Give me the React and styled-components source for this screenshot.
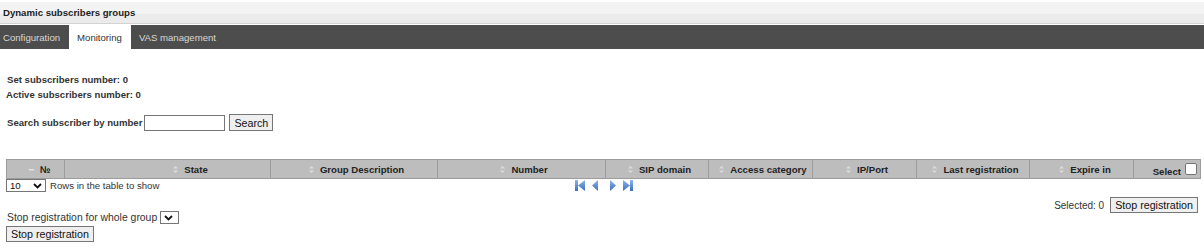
import React from 'react';
import styled, { createGlobalStyle } from 'styled-components';

const GlobalStyle = createGlobalStyle`
  body {
    margin: 0;
    background: #fff;
    font-family: "Liberation Sans", Arial, sans-serif;
    font-size: 9.6px;
    color: #333;
  }
`;

const Page = styled.div`
  width: 1204px;
  padding-top: 2px;
`;

const TitleBar = styled.div`
  height: 21px;
  padding-left: 3px;
  display: flex;
  align-items: center;
  background: linear-gradient(#f3f3f3 0, #f3f3f3 55%, #ebebeb 55%, #ebebeb 100%);
  border-bottom: 1px solid #d2d2d2;
  font-weight: bold;
  color: #222;
  margin-bottom: 1px;
`;

const TabBar = styled.div`
  display: flex;
  height: 24px;
  background: #4d4d4d;
`;

const Tab = styled.div`
  display: flex;
  align-items: center;
  padding: 0 9px 0 8px;
  color: ${(p) => (p.$active ? '#333' : '#d8d8d8')};
  background: ${(p) => (p.$active ? '#fff' : 'transparent')};
  &:first-child {
    padding-left: 3px;
  }
`;

const Content = styled.div`
  padding: 23px 6px 0 6px;
`;

const Stat = styled.div`
  font-weight: bold;
  line-height: 15px;
  padding-left: ${(p) => p.$indent || 0}px;
`;

const SearchRow = styled.div`
  display: flex;
  align-items: center;
  margin-top: 12px;
  padding-left: 1px;
  font-weight: bold;
  gap: 2px;
`;

const TextInput = styled.input`
  box-sizing: border-box;
  width: 81px;
  height: 16px;
  border: 1px solid #767676;
  padding: 1px;
  margin: 0;
`;

const Button = styled.button`
  box-sizing: border-box;
  font-family: "Liberation Sans", Arial, sans-serif;
  font-size: 10.7px;
  color: #111;
  background: #efefef;
  border: 1px solid #767676;
  padding: 0 4px;
  height: ${(p) => p.$h || 16}px;
  line-height: 12px;
  margin: ${(p) => (p.$gap ? '0 0 0 2px' : '0')};
`;

const Table = styled.table`
  width: 1194px;
  margin-top: 28px;
  border-collapse: collapse;
  table-layout: fixed;
`;

const Th = styled.th`
  box-sizing: border-box;
  background: #bdbdbd;
  border: 1px solid #9c9c9c;
  height: 19px;
  padding: 0 3px 0 ${(p) => p.$pl || 7}px;
  font-size: 9.6px;
  color: #222;
  text-align: ${(p) => p.$align || 'center'};
  vertical-align: middle;
  white-space: nowrap;
  overflow: hidden;
`;

const SortIcon = styled.svg`
  width: 7px;
  height: 9px;
  margin-right: 5px;
  vertical-align: -1px;
`;

const SelectBox = styled.span`
  display: inline-block;
  box-sizing: border-box;
  width: 12px;
  height: 12px;
  margin: 0 0 0 4px;
  border: 1px solid #767676;
  border-radius: 2px;
  background: #fff;
  vertical-align: middle;
`;

const SelectLabel = styled.span`
  display: inline-block;
  vertical-align: middle;
  padding-top: 4px;
`;

const Footer = styled.div`
  display: grid;
  grid-template-columns: 1fr auto 1fr;
  align-items: start;
`;

const RowsControl = styled.div`
  display: flex;
  align-items: center;
  gap: 4px;
`;

const MiniSelect = styled.div`
  display: flex;
  align-items: center;
  justify-content: space-between;
  box-sizing: border-box;
  width: ${(p) => p.$w}px;
  height: 13px;
  border: 1px solid #767676;
  padding: 0 3px 0 3px;
  font-size: 9.6px;
  color: #111;
  background: #fff;
`;

const Pager = styled.div`
  display: flex;
  align-items: center;
  gap: 7px;
  padding-top: 1px;
  margin-left: 3px;
`;

const PagerSvg = styled.svg`
  margin-left: ${(p) => p.$shift || 0}px;
`;

const SelectedBar = styled.div`
  display: flex;
  justify-content: flex-end;
  align-items: center;
  gap: 6px;
  margin-top: 5px;
  font-size: 10px;
`;

const GroupRow = styled.div`
  display: flex;
  align-items: center;
  gap: 3px;
  margin-top: -2px;
  margin-bottom: 2px;
  padding-left: 1px;
  font-size: 10.4px;
`;

const Chevron = () => (
  <svg width="9" height="6" viewBox="0 0 9 6">
    <path d="M1 1 L4.5 4.5 L8 1" stroke="#111" strokeWidth="1.8" fill="none" />
  </svg>
);

const Sort = ({ dash }) => (
  <SortIcon viewBox="0 0 7 9">
    {dash ? (
      <rect x="1" y="4" width="5" height="1.5" fill="#e4e4e4" />
    ) : (
      <>
        <path d="M1 3.5 L3.5 1 L6 3.5 Z" fill="#dcdcdc" />
        <path d="M1 5.5 L3.5 8 L6 5.5 Z" fill="#dcdcdc" />
      </>
    )}
  </SortIcon>
);

const PagerIcon = ({ kind, shift }) => {
  const double = kind === 'first' || kind === 'last';
  const w = double ? 10 : 6;
  const fill = `url(#g-${kind})`;
  return (
    <PagerSvg width={w} height="11" viewBox={`0 0 ${w} 11`} $shift={shift}>
      <defs>
        <linearGradient id={`g-${kind}`} x1="0" y1="0" x2="0" y2="1">
          <stop offset="0" stopColor="#8fb5ec" />
          <stop offset="1" stopColor="#3a6fc0" />
        </linearGradient>
      </defs>
      {kind === 'first' && (
        <>
          <rect x="0" y="0" width="3" height="11" fill={fill} />
          <path d="M10 0 L3 5.5 L10 11 Z" fill={fill} />
        </>
      )}
      {kind === 'prev' && <path d="M6 0 L0 5.5 L6 11 Z" fill={fill} />}
      {kind === 'next' && <path d="M0 0 L6 5.5 L0 11 Z" fill={fill} />}
      {kind === 'last' && (
        <>
          <path d="M0 0 L7 5.5 L0 11 Z" fill={fill} />
          <rect x="7" y="0" width="3" height="11" fill={fill} />
        </>
      )}
    </PagerSvg>
  );
};

const columns = [
  { label: '№', w: 58, dash: true, pl: 10 },
  { label: 'State', w: 206, pl: 48 },
  { label: 'Group Description', w: 167 },
  { label: 'Number', w: 168 },
  { label: 'SIP domain', w: 103 },
  { label: 'Access category', w: 104 },
  { label: 'IP/Port', w: 104 },
  { label: 'Last registration', w: 113 },
  { label: 'Expire in', w: 104, pl: 9 },
];

export default function App() {
  return (
    <Page>
      <GlobalStyle />
      <TitleBar>Dynamic subscribers groups</TitleBar>
      <TabBar>
        <Tab>Configuration</Tab>
        <Tab $active>Monitoring</Tab>
        <Tab>VAS management</Tab>
      </TabBar>
      <Content>
        <Stat $indent={1}>Set subscribers number: 0</Stat>
        <Stat>Active subscribers number: 0</Stat>
        <SearchRow>
          <span>Search subscriber by number</span>
          <TextInput type="text" />
          <Button $h={17} $gap>Search</Button>
        </SearchRow>
        <Table>
          <colgroup>
            {columns.map((c) => (
              <col key={c.label} style={{ width: c.w }} />
            ))}
            <col style={{ width: 67 }} />
          </colgroup>
          <thead>
            <tr>
              {columns.map((c) => (
                <Th key={c.label} $pl={c.pl}>
                  <Sort dash={c.dash} />
                  {c.label}
                </Th>
              ))}
              <Th $align="right">
                <SelectLabel>Select</SelectLabel>
                <SelectBox />
              </Th>
            </tr>
          </thead>
        </Table>
        <Footer>
          <RowsControl>
            <MiniSelect $w={40}>
              <span>10</span>
              <Chevron />
            </MiniSelect>
            <span>Rows in the table to show</span>
          </RowsControl>
          <Pager>
            <PagerIcon kind="first" />
            <PagerIcon kind="prev" />
            <PagerIcon kind="next" shift={5} />
            <PagerIcon kind="last" />
          </Pager>
          <div />
        </Footer>
        <SelectedBar>
          <span>Selected: 0</span>
          <Button>Stop registration</Button>
        </SelectedBar>
        <GroupRow>
          <span>Stop registration for whole group</span>
          <MiniSelect $w={19}>
            <Chevron />
          </MiniSelect>
        </GroupRow>
        <Button>Stop registration</Button>
      </Content>
    </Page>
  );
}
